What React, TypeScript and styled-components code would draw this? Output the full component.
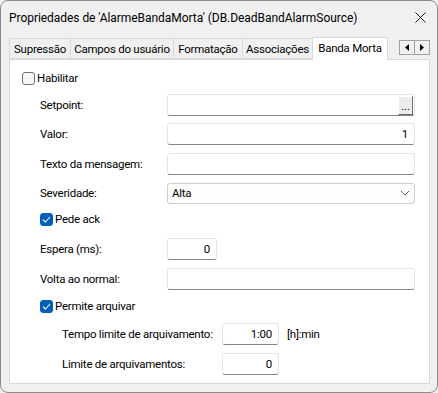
import React from "react";
import styled, { createGlobalStyle } from "styled-components";

const Global = createGlobalStyle`
  html, body { margin: 0; padding: 0; background: #f0f0f0; }
  * { box-sizing: border-box; }
  body { font-family: Roboto, "Liberation Sans", sans-serif; font-size: 11.5px; letter-spacing: -0.25px; color: #000; }
`;

const Window = styled.div`
  width: 438px;
  height: 393px;
  border: 1px solid #8c8c8c;
  border-radius: 8px;
  background: #f0f0f0;
  display: flex;
  flex-direction: column;
  overflow: hidden;
`;

const TitleBar = styled.div`
  height: 33px;
  display: flex;
  align-items: center;
  justify-content: space-between;
  padding: 0 6px 0 8px;
`;

const Title = styled.div`
  font-size: 12px;
  letter-spacing: -0.05px;
  white-space: nowrap;
`;

const CloseBtn = styled.div`
  width: 22px;
  height: 22px;
  display: flex;
  align-items: center;
  justify-content: center;
`;

const Body = styled.div`
  flex: 1;
  display: flex;
  flex-direction: column;
  padding: 3px 7px 8px 8px;
`;

const TabStrip = styled.div`
  height: 22px;
  display: flex;
  align-items: flex-end;
`;

const Tab = styled.div<{ $w: number; $active?: boolean }>`
  width: ${(p) => p.$w}px;
  height: ${(p) => (p.$active ? 23 : 21)}px;
  margin-bottom: ${(p) => (p.$active ? -1 : 0)}px;
  position: relative;
  z-index: ${(p) => (p.$active ? 2 : 0)};
  background: ${(p) => (p.$active ? "#ffffff" : "#f0f0f0")};
  border: 1px solid #d9d9d9;
  border-bottom: ${(p) => (p.$active ? "none" : "1px solid #d9d9d9")};
  margin-left: -1px;
  display: flex;
  align-items: ${(p) => (p.$active ? "flex-start" : "center")};
  padding-top: ${(p) => (p.$active ? 3 : 0)}px;
  justify-content: center;
  white-space: nowrap;
  &:first-child { margin-left: 0; }
`;

const Scroller = styled.div`
  margin-left: auto;
  align-self: flex-start;
  margin-top: 3px;
  display: flex;
`;

const ScrollBtn = styled.div`
  width: 16px;
  height: 15px;
  border: 1px solid #a0a0a0;
  background: #f0f0f0;
  display: flex;
  align-items: center;
  justify-content: center;
  & + & { margin-left: -1px; }
`;

const Panel = styled.div`
  flex: 1;
  background: #ffffff;
  border: 1px solid #d9d9d9;
  position: relative;
  z-index: 1;
  padding: 0 0 0 12px;
  display: flex;
  flex-direction: column;
`;

const Row = styled.div<{ $mt: number; $indent?: number }>`
  height: 22px;
  margin-top: ${(p) => p.$mt}px;
  margin-left: ${(p) => p.$indent ?? 0}px;
  display: flex;
  align-items: center;
`;

const Label = styled.div<{ $w: number }>`
  width: ${(p) => p.$w}px;
  flex: none;
  white-space: nowrap;
`;

const CheckBox = styled.div<{ $checked?: boolean }>`
  width: 13px;
  height: 13px;
  border-radius: 3px;
  flex: none;
  border: 1px solid ${(p) => (p.$checked ? "#005fb8" : "#6f6f6f")};
  background: ${(p) => (p.$checked ? "#005fb8" : "#f6f6f6")};
  display: flex;
  align-items: center;
  justify-content: center;
  margin-right: 2px;
`;

const Input = styled.div<{ $w: number }>`
  width: ${(p) => p.$w}px;
  height: 22px;
  flex: none;
  background: #ffffff;
  border: 1px solid #e5e5e5;
  border-bottom-color: #868686;
  border-radius: 3px;
  display: flex;
  align-items: center;
  justify-content: flex-end;
  padding: 0 6px 1px;
`;

const BrowseInput = styled(Input)`
  padding: 0 1px 0 0;
`;

const BrowseBtn = styled.div`
  width: 15px;
  height: 19px;
  background: #ececec;
  border-top: 1px solid #ffffff;
  border-left: 1px solid #ffffff;
  border-right: 1px solid #696969;
  border-bottom: 1px solid #696969;
  display: flex;
  align-items: center;
  justify-content: center;
  font-size: 11px;
  letter-spacing: 0;
  line-height: 1;
  padding-top: 2px;
`;

const Select = styled.div`
  width: 248px;
  height: 21px;
  background: #fdfdfd;
  border: 1px solid #cfcfcf;
  border-radius: 3px;
  display: flex;
  align-items: center;
  justify-content: space-between;
  padding: 0 4px 0 4px;
`;

const Unit = styled.div`
  margin-left: 8px;
`;

const Check = () => (
  <svg width="9" height="7" viewBox="0 0 9 7">
    <path d="M1 3.6 L3.4 6 L8 1" fill="none" stroke="#fff" strokeWidth="1.1" />
  </svg>
);

export default function App() {
  return (
    <>
      <Global />
      <Window>
        <TitleBar>
          <Title>Propriedades de 'AlarmeBandaMorta' (DB.DeadBandAlarmSource)</Title>
          <CloseBtn>
            <svg width="11" height="11" viewBox="0 0 11 11">
              <path d="M0.5 0.5 L10.5 10.5 M10.5 0.5 L0.5 10.5" stroke="#1a1a1a" strokeWidth="1" />
            </svg>
          </CloseBtn>
        </TitleBar>
        <Body>
          <TabStrip>
            <Tab $w={62}>Supressão</Tab>
            <Tab $w={104}>Campos do usuário</Tab>
            <Tab $w={70}>Formatação</Tab>
            <Tab $w={71}>Associações</Tab>
            <Tab $w={76} $active>Banda Morta</Tab>
            <Scroller>
              <ScrollBtn>
                <svg width="4" height="7" viewBox="0 0 4 7"><path d="M4 0 L0 3.5 L4 7 Z" fill="#000" /></svg>
              </ScrollBtn>
              <ScrollBtn>
                <svg width="4" height="7" viewBox="0 0 4 7"><path d="M0 0 L4 3.5 L0 7 Z" fill="#000" /></svg>
              </ScrollBtn>
            </Scroller>
          </TabStrip>
          <Panel>
            <Row $mt={7}>
              <CheckBox />
              <span>Habilitar</span>
            </Row>
            <Row $mt={5} $indent={18}>
              <Label $w={127}>Setpoint:</Label>
              <BrowseInput $w={248}>
                <BrowseBtn>...</BrowseBtn>
              </BrowseInput>
            </Row>
            <Row $mt={7} $indent={18}>
              <Label $w={127}>Valor:</Label>
              <Input $w={248}>1</Input>
            </Row>
            <Row $mt={8} $indent={18}>
              <Label $w={127}>Texto da mensagem:</Label>
              <Input $w={248} />
            </Row>
            <Row $mt={7} $indent={18}>
              <Label $w={127}>Severidade:</Label>
              <Select>
                <span>Alta</span>
                <svg width="10" height="6" viewBox="0 0 10 6">
                  <path d="M1 1 L5 5 L9 1" fill="none" stroke="#606060" strokeWidth="1" />
                </svg>
              </Select>
            </Row>
            <Row $mt={4} $indent={18}>
              <CheckBox $checked><Check /></CheckBox>
              <span>Pede ack</span>
            </Row>
            <Row $mt={8} $indent={18}>
              <Label $w={127}>Espera (ms):</Label>
              <Input $w={50}>0</Input>
            </Row>
            <Row $mt={8} $indent={18}>
              <Label $w={127}>Volta ao normal:</Label>
              <Input $w={248} />
            </Row>
            <Row $mt={5} $indent={18}>
              <CheckBox $checked><Check /></CheckBox>
              <span>Permite arquivar</span>
            </Row>
            <Row $mt={6} $indent={40}>
              <Label $w={160}>Tempo limite de arquivamento:</Label>
              <Input $w={57}>1:00</Input>
              <Unit>[h]:min</Unit>
            </Row>
            <Row $mt={8} $indent={40}>
              <Label $w={160}>Limite de arquivamentos:</Label>
              <Input $w={57}>0</Input>
            </Row>
          </Panel>
        </Body>
      </Window>
    </>
  );
}
